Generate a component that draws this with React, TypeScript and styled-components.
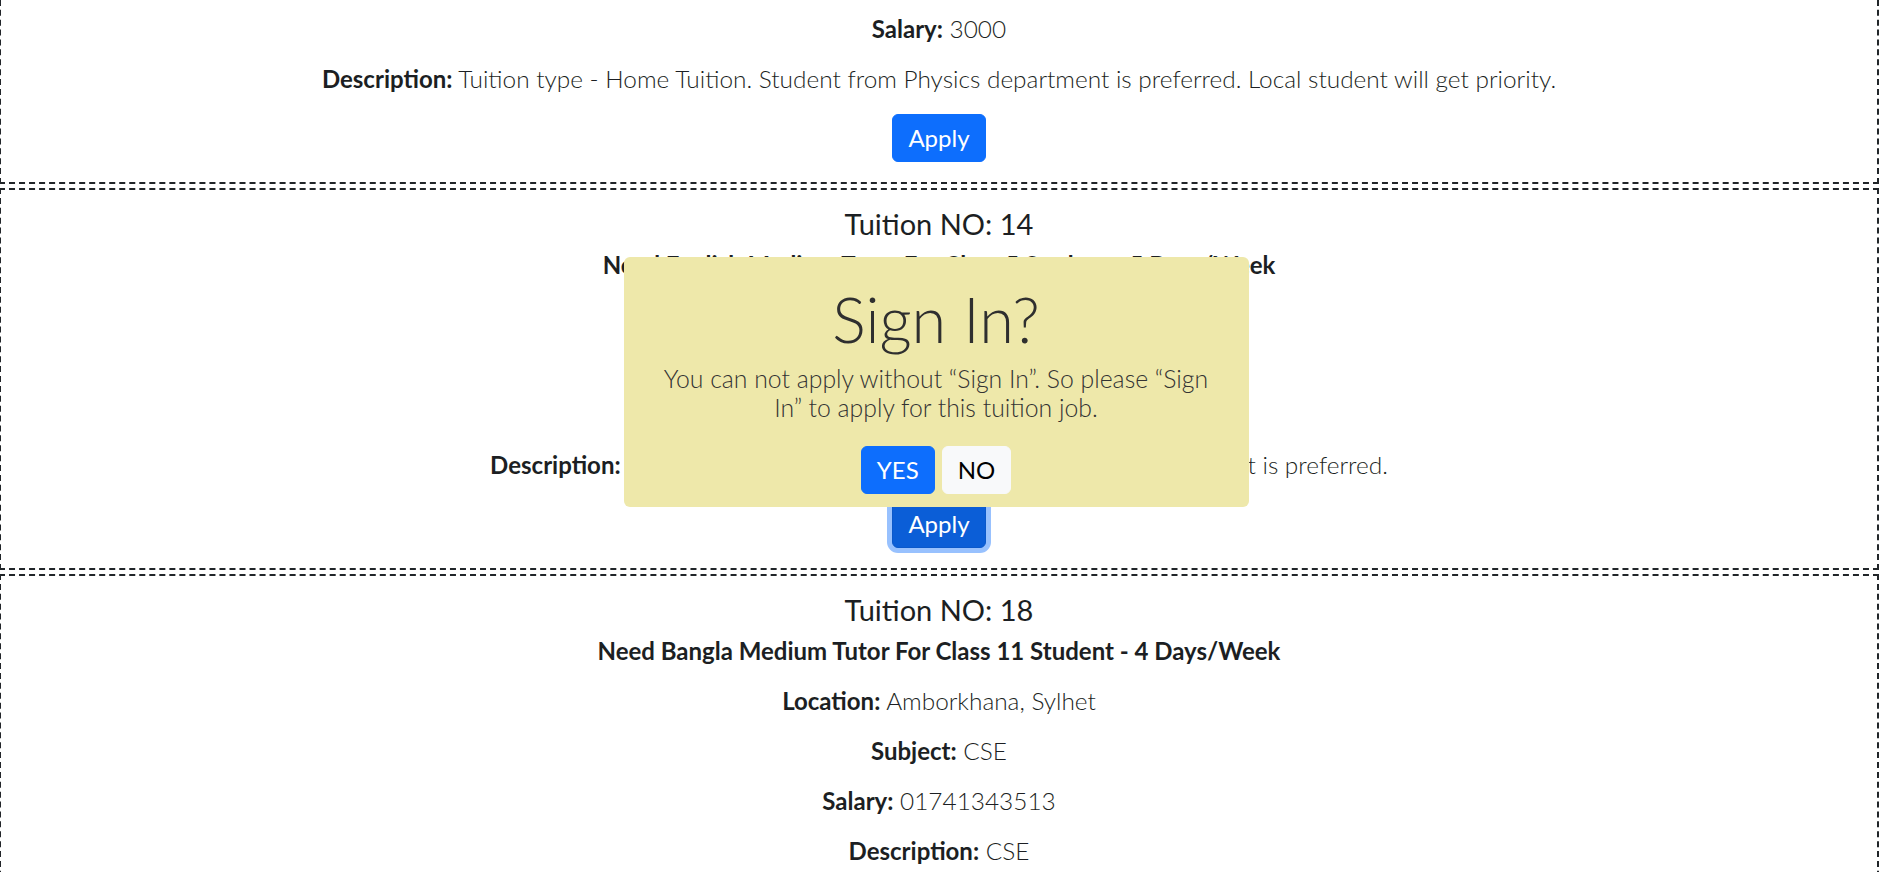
import React from "react";
import styled, { createGlobalStyle } from "styled-components";

const GlobalStyle = createGlobalStyle`
  html, body {
    margin: 0;
    padding: 0;
    overflow: hidden;
    background: #ffffff;
  }
  body {
    font-family: "Lato", "Noto Sans", sans-serif;
    font-size: 24.4px;
    font-weight: 300;
    line-height: 30px;
    color: #1c1f23;
  }
  * { box-sizing: border-box; }
`;

const Page = styled.main`
  height: 100vh;
  overflow: hidden;
`;

const List = styled.section`
  display: flex;
  flex-direction: column;
  gap: 4px;
  margin: -198px 0 0 -1px;
  width: calc(100% - 3px);
`;

const Card = styled.article`
  border: 2px dashed #212529;
  padding: 16px 12px 20px;
  text-align: center;
`;

const TuitionNo = styled.h4`
  margin: 0 0 8px;
  font-size: 29px;
  line-height: 36px;
  font-weight: 400;
`;

const Title = styled.p`
  margin: 0 0 20px;
  font-size: 24px;
  font-weight: 700;
`;

const Field = styled.p`
  margin: 0 0 20px;
`;

const Label = styled.strong`
  font-size: 24px;
  font-weight: 700;
`;

const Actions = styled.div<{ $offset?: number }>`
  display: flex;
  justify-content: center;
  gap: 7px;
  margin-top: ${(p) => p.$offset ?? 0}px;
`;

const Button = styled.button<{ $variant?: "primary" | "light"; $focused?: boolean }>`
  font-family: inherit;
  font-size: 24px;
  font-weight: 400;
  line-height: 30px;
  padding: 8px 15px;
  border-radius: 6px;
  cursor: pointer;
  border: 1px solid
    ${(p) => (p.$variant === "light" ? "#f8f9fa" : p.$focused ? "#0a58ca" : "#0d6efd")};
  background: ${(p) => (p.$variant === "light" ? "#f8f9fa" : p.$focused ? "#0b5ed7" : "#0d6efd")};
  color: ${(p) => (p.$variant === "light" ? "#000000" : "#ffffff")};
  box-shadow: ${(p) => (p.$focused ? "0 0 0 5px rgba(49, 132, 253, 0.5)" : "none")};
`;

const Dialog = styled.div`
  position: fixed;
  top: 257px;
  left: calc(50% - 318px);
  width: 625px;
  background: #eee8aa;
  border-radius: 6px;
  padding: 26px 20px 13px;
  text-align: center;
  color: #333333;
`;

const DialogTitle = styled.h1`
  margin: 0 0 9px;
  font-size: 63px;
  line-height: 72px;
  font-weight: 300;
  color: #2f2f2f;
`;

const DialogText = styled.p`
  margin: 0 0 24px;
  font-size: 24.8px;
  line-height: 29px;
  color: #333333;
`;

type Tuition = {
  no: number;
  title: string;
  location: string;
  subject: string;
  salary: string;
  description: string;
  focused?: boolean;
};

const tuitions: Tuition[] = [
  {
    no: 13,
    title: "Need Physics Tutor For HSC Student - 3 Days/Week",
    location: "Zindabazar, Sylhet",
    subject: "Physics",
    salary: "3000",
    description:
      "Tuition type - Home Tuition. Student from Physics department is preferred. Local student will get priority.",
  },
  {
    no: 14,
    title: "Need English Medium Tutor For Class 5 Student - 5 Days/Week",
    location: "Shibganj, Sylhet",
    subject: "Math",
    salary: "2500",
    description: "Tuition type - Home Tuition. Student from Math department is preferred.",
    focused: true,
  },
  {
    no: 18,
    title: "Need Bangla Medium Tutor For Class 11 Student - 4 Days/Week",
    location: "Amborkhana, Sylhet",
    subject: "CSE",
    salary: "01741343513",
    description: "CSE",
  },
];

function TuitionCard({ t }: { t: Tuition }) {
  return (
    <Card>
      <TuitionNo>Tuition NO: {t.no}</TuitionNo>
      <Title>{t.title}</Title>
      <Field>
        <Label>Location:</Label> {t.location}
      </Field>
      <Field>
        <Label>Subject:</Label> {t.subject}
      </Field>
      <Field>
        <Label>Salary:</Label> {t.salary}
      </Field>
      <Field>
        <Label>Description:</Label> {t.description}
      </Field>
      <Actions $offset={3}>
        <Button $variant="primary" $focused={t.focused}>
          Apply
        </Button>
      </Actions>
    </Card>
  );
}

export default function App() {
  return (
    <Page>
      <GlobalStyle />
      <List>
        {tuitions.map((t) => (
          <TuitionCard key={t.no} t={t} />
        ))}
      </List>
      <Dialog role="dialog" aria-modal="true">
        <DialogTitle>Sign In?</DialogTitle>
        <DialogText>
          You can not apply without “Sign In”. So please “Sign
          <br />
          In” to apply for this tuition job.
        </DialogText>
        <Actions>
          <Button $variant="primary">YES</Button>
          <Button $variant="light">NO</Button>
        </Actions>
      </Dialog>
    </Page>
  );
}
